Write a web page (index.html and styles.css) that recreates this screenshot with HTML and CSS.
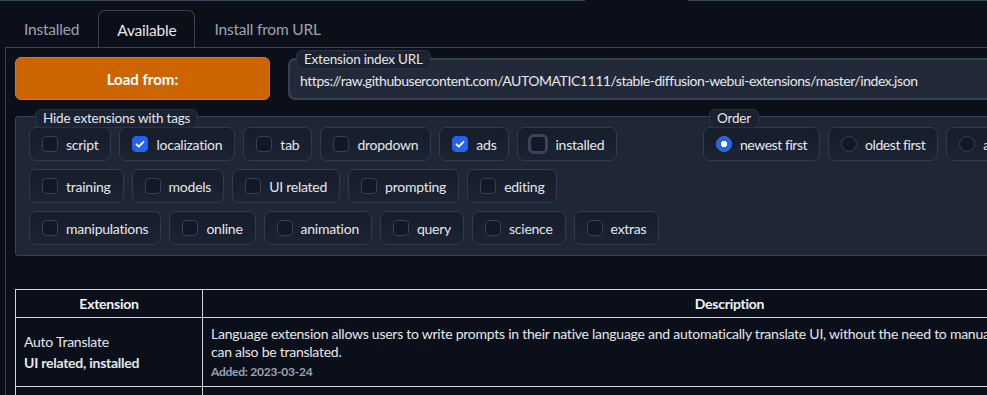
FILE: index.html
```html
<!doctype html>
<html lang="en">
<head>
    <meta charset="UTF-8">
    <title>Extensions</title>
    <link rel="stylesheet" href="styles.css">
</head>
<body>
<div class="app-tabs">
    <span class="line line-left"></span>
    <span class="line-gap"></span>
    <span class="line line-right"></span>
</div>

<div class="tabs">
    <div class="tab-nav">
        <button class="tab">Installed</button>
        <button class="tab selected">Available</button>
        <button class="tab">Install from URL</button>
    </div>

    <div class="tabitem">
        <div class="row-load">
            <button class="btn-primary">Load from:</button>
            <label class="textbox">
                <span class="block-label">Extension index URL</span>
                <span class="url">https://raw.githubusercontent.com/AUTOMATIC1111/stable-diffusion-webui-extensions/master/index.json</span>
            </label>
        </div>

        <div class="filters">
            <div class="group tags">
                <span class="block-label">Hide extensions with tags</span>
                <div class="wrap">
                    <label class="item"><span class="check"></span>script</label>
                    <label class="item"><span class="check on"><svg viewBox="0 0 16 16"><path d="M4 8.3l2.6 2.6L12 5.5" fill="none" stroke="#fff" stroke-width="2" stroke-linecap="round" stroke-linejoin="round"/></svg></span>localization</label>
                    <label class="item"><span class="check"></span>tab</label>
                    <label class="item"><span class="check"></span>dropdown</label>
                    <label class="item"><span class="check on"><svg viewBox="0 0 16 16"><path d="M4 8.3l2.6 2.6L12 5.5" fill="none" stroke="#fff" stroke-width="2" stroke-linecap="round" stroke-linejoin="round"/></svg></span>ads</label>
                    <label class="item"><span class="check focus"></span>installed</label>
                    <label class="item"><span class="check"></span>training</label>
                    <label class="item"><span class="check"></span>models</label>
                    <label class="item"><span class="check"></span>UI related</label>
                    <label class="item"><span class="check"></span>prompting</label>
                    <label class="item"><span class="check"></span>editing</label>
                    <label class="item"><span class="check"></span>manipulations</label>
                    <label class="item"><span class="check"></span>online</label>
                    <label class="item"><span class="check"></span>animation</label>
                    <label class="item"><span class="check"></span>query</label>
                    <label class="item"><span class="check"></span>science</label>
                    <label class="item"><span class="check"></span>extras</label>
                </div>
            </div>
            <div class="group order">
                <span class="block-label">Order</span>
                <div class="wrap">
                    <label class="item"><span class="radio on"></span>newest first</label>
                    <label class="item"><span class="radio"></span>oldest first</label>
                    <label class="item"><span class="radio"></span>a-z</label>
                </div>
            </div>
        </div>

        <table class="ext-table">
            <thead>
            <tr>
                <th class="col-name">Extension</th>
                <th class="col-desc">Description</th>
            </tr>
            </thead>
            <tbody>
            <tr>
                <td class="name">Auto Translate<br><b>UI related, installed</b></td>
                <td class="desc">Language extension allows users to write prompts in their native language and automatically translate UI, without the need to manually download configuration files. New plugins<br>can also be translated.<div class="added">Added: 2023-03-24</div></td>
            </tr>
            <tr>
                <td class="name">&nbsp;</td>
                <td class="desc">&nbsp;</td>
            </tr>
            </tbody>
        </table>
    </div>
</div>
</body>
</html>
```

FILE: styles.css
```css
* {
    margin: 0;
    padding: 0;
    box-sizing: border-box;
}

html, body {
    width: 987px;
    height: 395px;
    overflow: hidden;
    background: #0b0f19;
}

body {
    font-family: Lato, "Liberation Sans", sans-serif;
    font-size: 14px;
    color: #e5e7eb;
    padding-left: 5px;
}

.app-tabs {
    display: flex;
    height: 1px;
    margin-left: -5px;
}

.line {
    height: 1px;
    background: #374151;
}

.line-left {
    width: 585px;
}

.line-gap {
    width: 103px;
}

.line-right {
    flex: 1;
}

.tabs {
    width: 1400px;
    margin-top: 9px;
}

.tab-nav {
    display: flex;
    border-bottom: 1px solid #374151;
    height: 38px;
}

.tab {
    height: 38px;
    padding: 0 18px;
    border: 1px solid transparent;
    border-radius: 7px 7px 0 0;
    background: transparent;
    font-family: inherit;
    font-size: 15.5px;
    color: #9ca3af;
    letter-spacing: -0.2px;
}

.tab.selected {
    height: 39px;
    border-color: #374151;
    border-bottom-color: #0b0f19;
    color: #e5e7eb;
}

.tabitem {
    border: 1px solid #374151;
    border-top: none;
    padding: 9px 9px;
    height: 400px;
}

.row-load {
    display: flex;
    gap: 18px;
    align-items: flex-start;
}

.btn-primary {
    width: 255px;
    height: 43px;
    background: #cc6500;
    border: 1px solid #dd7712;
    border-radius: 6px;
    color: #fff;
    font-family: inherit;
    font-size: 15px;
    font-weight: 700;
}

.textbox {
    position: relative;
    flex: 1;
    height: 42px;
    margin-top: 1px;
    background: #222a39;
    border: 2px solid #374151;
    border-radius: 7px;
    display: flex;
    align-items: center;
    padding: 2px 10px 0;
}

.url {
    white-space: nowrap;
    font-size: 14px;
    letter-spacing: -0.45px;
    color: #e5e7eb;
}

.block-label {
    position: absolute;
    background: #1b2231;
    border: 1px solid #2a3343;
    border-radius: 6px;
    padding: 0 7px;
    height: 19px;
    line-height: 17px;
    font-size: 13.5px;
    letter-spacing: -0.2px;
    color: #e5e7eb;
    white-space: nowrap;
}

.textbox .block-label {
    top: -10px;
    left: 6px;
}

.filters {
    display: flex;
    gap: 12px;
    margin-top: 16px;
    background: #1f2737;
    border: 1px solid #374151;
    border-radius: 3px;
    padding: 10px 13px;
}

.group {
    position: relative;
}

.group .block-label {
    top: -18px;
    left: 6px;
}

.tags {
    width: 662px;
}

.order {
    flex: 1;
}

.wrap {
    display: flex;
    flex-wrap: wrap;
    gap: 8px;
}

.item {
    display: flex;
    align-items: center;
    gap: 8px;
    height: 34px;
    padding: 0 12px;
    border: 1px solid #323b4b;
    border-radius: 7px;
    background: linear-gradient(to bottom, #151c2a, #1c2433);
    color: #e5e7eb;
    font-size: 14px;
    letter-spacing: -0.25px;
    white-space: nowrap;
}

.order .item {
    letter-spacing: -0.45px;
}

.check {
    width: 16px;
    height: 16px;
    flex: none;
    border: 1px solid #374151;
    border-radius: 4px;
    background: #111827;
}

.check svg {
    display: block;
    width: 14px;
    height: 14px;
}

.check.on {
    background: #2563eb;
    border-color: #2563eb;
}

.check.focus {
    width: 20px;
    height: 20px;
    margin: 0 -1px 0 -2px;
    border: 3px solid #3b4454;
    border-radius: 6px;
}

.radio {
    width: 16px;
    height: 16px;
    flex: none;
    border: 1px solid #374151;
    border-radius: 50%;
    background: #111827;
}

.radio.on {
    background: #2563eb radial-gradient(circle, #fff 0 3px, transparent 3.5px);
    border-color: #3b6fe0;
}

.ext-table {
    margin-top: 33px;
    border-collapse: collapse;
    table-layout: fixed;
    width: 1242px;
}

.ext-table th,
.ext-table td {
    border: 1px solid #d1d5db;
    padding: 4px 8px;
    text-align: left;
    letter-spacing: -0.25px;
}

.ext-table th {
    height: 28px;
    text-align: center;
    font-weight: 700;
    color: #f3f4f6;
}

.col-name {
    width: 187px;
}

.ext-table .name {
    vertical-align: middle;
    line-height: 21px;
}

.name b {
    font-weight: 700;
}

.ext-table .desc {
    padding: 7px 8px 6px;
    line-height: 18px;
    white-space: nowrap;
}

.added {
    margin-top: 3px;
    font-size: 12px;
    line-height: 16px;
    font-weight: 700;
    color: #9ca3af;
}
```
